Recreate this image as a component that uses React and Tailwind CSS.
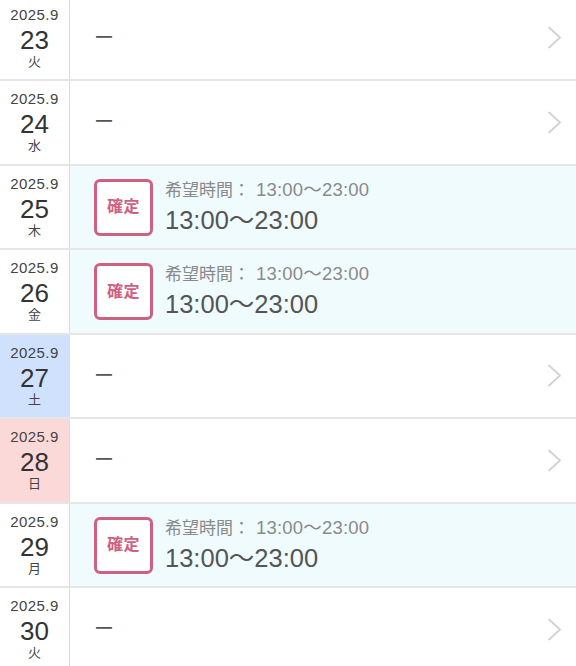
import React from "react";

const rows = [
  { d: "23", w: "火", type: "none" },
  { d: "24", w: "水", type: "none" },
  { d: "25", w: "木", type: "ok" },
  { d: "26", w: "金", type: "ok" },
  { d: "27", w: "土", type: "none", day: "sat" },
  { d: "28", w: "日", type: "none", day: "sun" },
  { d: "29", w: "月", type: "ok" },
  { d: "30", w: "火", type: "none" },
];

function Chevron() {
  return (
    <svg width="15" height="23" viewBox="0 0 15 23" fill="none" className="shrink-0">
      <path d="M2 1.5 L13 11.5 L2 21.5" stroke="#d2d2d2" strokeWidth="1.8" strokeLinecap="round" strokeLinejoin="round" />
    </svg>
  );
}

function Row({ r }) {
  const dateBg = r.day === "sat" ? "bg-[#cfe1fc]" : r.day === "sun" ? "bg-[#fcd9d9]" : "";
  const rowBg = r.type === "ok" ? "bg-[#effbfd]" : "bg-white";
  return (
    <div className={`flex h-[84.5px] border-b-2 border-[#e6e6e6] ${rowBg}`}>
      <div className="w-[70px] shrink-0 border-r border-[#dcdcdc] bg-white">
        <div className={`w-full h-full flex flex-col items-center justify-center ${dateBg}`}>
          <div className="text-[15px] leading-[16px] tracking-[0.4px] text-[#444]">2025.9</div>
          <div className="text-[26px] leading-[26px] mt-[4px] text-[#333]">{r.d}</div>
          <div className="text-[13px] leading-[14px] mt-[2px] text-[#444]">{r.w}</div>
        </div>
      </div>
      <div className="flex-1 flex items-center pl-[24px] pr-[14px]">
        {r.type === "ok" ? (
          <div className="flex items-center flex-1">
            <div className="w-[59px] h-[57px] border-[3px] border-[#d0607f] rounded-[6px] bg-white flex items-center justify-center mt-[1px]">
              <span className="text-[16px] font-bold text-[#d0607f] tracking-[0.5px]">確定</span>
            </div>
            <div className="ml-[12px] flex flex-col">
              <div className="leading-[22px] text-[#8a8a8a]">
                <span className="text-[17px]">希望時間：</span>
                <span className="text-[18.5px] ml-[6px] tracking-[0.2px]">13:00〜23:00</span>
              </div>
              <div className="text-[25.5px] leading-[30px] text-[#555] mt-[3px]">13:00〜23:00</div>
            </div>
          </div>
        ) : (
          <div className="flex-1 flex items-center">
            <span className="text-[20px] text-[#555] leading-none">ー</span>
          </div>
        )}
        {r.type !== "ok" && <Chevron />}
      </div>
    </div>
  );
}

export default function App() {
  return (
    <div
      className="w-[576px] h-[666px] overflow-hidden bg-white"
      style={{ fontFamily: '"Liberation Sans", "Noto Sans CJK JP", sans-serif' }}
    >
      <div className="-mt-[3.5px]">
        {rows.map((r, i) => (
          <Row key={i} r={r} />
        ))}
      </div>
    </div>
  );
}
